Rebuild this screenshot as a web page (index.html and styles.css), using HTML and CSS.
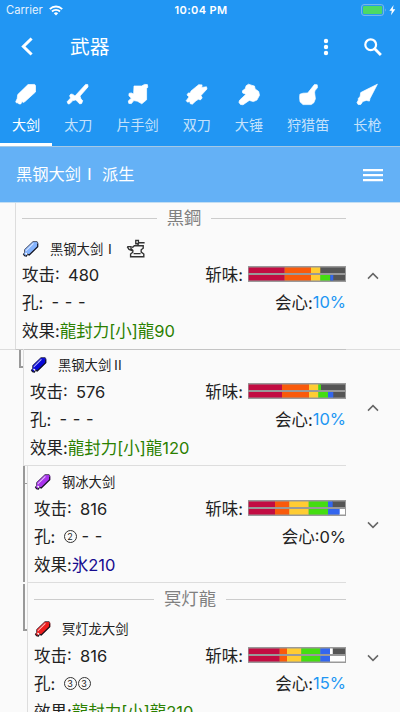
FILE: index.html
```html
<!DOCTYPE html>
<html lang="zh-CN">
<head>
<meta charset="utf-8">
<meta name="viewport" content="width=device-width">
<title>武器</title>
<link rel="stylesheet" href="styles.css">
</head>
<body>
<svg class="defs" aria-hidden="true">
  <symbol id="blade" viewBox="0 0 17 17">
    <path d="M11 1.5h4.2l1 1v4.2L7.5 15.2l-2-.7-1 1.8-1.8-.3-1.5-1.8 1.2-1.8.3-3.2z" fill="currentColor"/>
    <path d="M10.8 3.2 3.6 10.4l.2 1.2L12 3.6z" fill="#fff" opacity=".75"/>
    <path d="M15.7 3.5v3.2L7.2 15l-1.8-.8-1 1.8-1.8-.2-1.2-1.6" fill="none" stroke="#15151f" stroke-width="1.2"/>
    <path d="M1.3 14.2 2.6 12.4 2.5 9.6 11 1.6h4l.9 1.8" fill="none" stroke="#4c4c58" stroke-width=".9"/>
    <path d="m3.5 13 1.8 1.5" stroke="#fff" stroke-width="1.2"/>
  </symbol>
  <symbol id="up" viewBox="0 0 12 8"><path d="m1 6.6 5-5 5 5" fill="none" stroke="#666" stroke-width="1.5"/></symbol>
  <symbol id="down" viewBox="0 0 12 8"><path d="m1 1.4 5 5 5-5" fill="none" stroke="#666" stroke-width="1.5"/></symbol>
</svg>

<header class="top">
  <div class="status">
    <div class="carrier">Carrier
      <svg width="14" height="11" viewBox="0 0 14 11" fill="none" stroke="#fff" stroke-width="1.9"><path d="M.8 4.1a8.8 8.8 0 0 1 12.4 0M3 6.5a5.7 5.7 0 0 1 8 0"/><path d="M7 10.6 4.8 8.3a3.2 3.2 0 0 1 4.4 0z" fill="#fff" stroke="none"/></svg>
    </div>
    <div class="clock">10:04 PM</div>
    <div class="power">
      <svg width="35" height="12" viewBox="0 0 35 12"><rect x=".6" y=".6" width="22" height="10.8" rx="2.4" fill="none" stroke="#7fb9e8" stroke-width="1"/><rect x="2" y="2" width="19.2" height="8" rx="1.2" fill="#4cd964"/><path d="M24 4.2q1.6 1.8 0 3.6z" fill="#7fb9e8"/><path d="M32.6 1 28.4 6.8h2.4l-.8 4.4 4.3-6h-2.5z" fill="#fff"/></svg>
    </div>
  </div>
  <div class="toolbar">
    <svg class="back" width="12" height="19" viewBox="0 0 12 19"><path d="M10.6 1.5 2.4 9.5l8.2 8" fill="none" stroke="#fff" stroke-width="3"/></svg>
    <h1>武器</h1>
    <svg class="more" width="6" height="18" viewBox="0 0 6 18" fill="#fff"><circle cx="3" cy="3" r="2.2"/><circle cx="3" cy="9" r="2.2"/><circle cx="3" cy="15" r="2.2"/></svg>
    <svg class="search" width="18" height="18" viewBox="0 0 18 18" fill="none" stroke="#fff"><circle cx="6.7" cy="6.7" r="5.4" stroke-width="2.2"/><path d="m10.7 10.7 6.2 6.2" stroke-width="2.8"/></svg>
  </div>
  <nav class="tabs">
    <a class="tab active"><svg viewBox="0 0 24 24"><path d="M14 1.6 20.6 1.4 21.5 2.6V9L11 18.5l-1.6 1-1.4-.9-1.2 2.4-2-.1-.7-1.2-1.4.4-1-1.3 1.5-3.2.5-4z"/></svg>大剑</a>
    <a class="tab"><svg viewBox="0 0 24 24"><path d="M19.6 1.4 21.8 1.6l.2 2.3-8 9.2 1 3 1.7 1.5-1 2.8-2 .5-2.3-2.4-1.6-1.5-3 .6-2.8 3-1.8.4-1.1-2.2L4.6 15l-1-2.2L4.9 11l2 .4L9 13z"/></svg>太刀</a>
    <a class="tab"><svg viewBox="0 0 24 24"><path d="M8 3h7.6l3-1.6 2.8.2.4 2.6-1.2 1.4v11.2l-4.8 4-4.4-2.6-3.6-.6-2.4 3-2.6-.2-.5-2.5 3-2.7-2.4-2.4.1-2.4 2.2-.5 2.4 1.1z"/></svg>片手剑</a>
    <a class="tab"><svg viewBox="0 0 24 24"><path d="m6 8 7.7-6.3 3.4.2-.4 2.5 4.8-.6.5 2.2-6 6.5 1.2 2.4-1.8 2-2-.6-2.4 1.5-3.7 3.4-2.2-.6-.3-2.2-2.2.8-1.4-1.5 2.8-3.8-2-2 1.3-2 2 .2z"/></svg>双刀</a>
    <a class="tab"><svg viewBox="0 0 24 24"><path d="M5.4 7.8 8.2 5.8 9.1 2.8 11.5 1.2l3 1 3 .9.6 2.8 3.6 2.6.8 3.8-2.6 4.8-3.6 1.5-4-1.2-6.3 4.4-2.6-.4-1.5-2.2.9-2.2L9 11.2 5.7 10z"/></svg>大锤</a>
    <a class="tab"><svg viewBox="0 0 24 24"><path d="m18.4 1.6 2.8.2.3 2.8-2.6 3.2-.3 2 .8 6-1.6 4-2.6 1.8H7l-3-2.8-.4-4.2.3-3.4 3.2-1 4.6-.2z"/></svg>狩猎笛</a>
    <a class="tab"><svg viewBox="0 0 24 24"><path d="M22.4 1.2 15 15.5l-.6 2.6-3-.7-3.6 1-2 3-2.6.2-1.2-2 1.4-2.6-.2-1.6 1.9-1.8.6-4 5.4-2.8z"/></svg>长枪</a>
  </nav>
</header>

<section class="subbar">
  <h2>黑钢大剑<span class="numeral">Ⅰ</span> 派生</h2>
  <svg width="20" height="14" viewBox="0 0 20 14" fill="#fff"><path d="M0 1h20v2.3H0zM0 6h20v2.3H0zM0 11h20v2.3H0z"/></svg>
</section>

<main class="tree">
  <article class="node root">
    <div class="body">
      <div class="series"><span>黒鋼</span></div>
      <div class="name"><svg class="blade base"><use href="#blade"/></svg>黑钢大剑<span class="numeral">Ⅰ</span>
        <svg class="forge" viewBox="0 0 20 20" fill="none" stroke="#333" stroke-width="1.4"><path d="M1.2 7.6H5v2.2l1.8 1.6v1.8L4.6 15v2.8h13.2V15l-2.6-1.8v-2.4l2-1.6V6.8H8.4L6.2 8.6M1.2 7.6 3 10.4l3.8 1.4M7.6 14.6h7"/><path d="M12 6.6V4.2M12.4 3.8h6.2"/><path d="M9.8 1.4h2.6v3.4H9.8z" fill="#fafafa"/></svg></div>
      <div class="row"><span>攻击:&ensp;480</span><span class="sharp">斩味:
        <svg class="gauge" viewBox="0 0 98 16"><rect width="98" height="16" fill="#999"/><g transform="translate(0 1.5)"><path fill="#555" d="M72 0h25v5.5H72z"/><path fill="#c20c42" d="M.7 0h36v5.5H.7z"/><path fill="#f95a0b" d="M36.7 0H63v5.5H36.7z"/><path fill="#fc3" d="M63 0h9.3v5.5H63z"/></g><g transform="translate(0 9)"><path fill="#555" d="M82 0h15v5.5H82z"/><path fill="#c20c42" d="M.7 0h36v5.5H.7z"/><path fill="#f95a0b" d="M36.7 0H63v5.5H36.7z"/><path fill="#fc3" d="M63 0h9.3v5.5H63z"/><path fill="#4d1" d="M72.3 0h10v5.5h-10z"/><path fill="#36e" d="M82.3 0h3v5.5h-3z"/></g></svg></span></div>
      <div class="row"><span>孔:&ensp;<i class="slots">- - -</i></span><span>会心:<b class="plus">10%</b></span></div>
      <div class="row"><span>效果:<b class="dragon">龍封力[小]龍90</b></span></div>
    </div>
    <div class="toggle"><svg><use href="#up"/></svg></div>
  </article>

  <article class="node second">
    <div class="branch"></div>
    <div class="body">
      <div class="name"><svg class="blade navy"><use href="#blade"/></svg>黑钢大剑<span class="numeral">Ⅱ</span></div>
      <div class="row"><span>攻击:&ensp;576</span><span class="sharp">斩味:
        <svg class="gauge" viewBox="0 0 98 16"><rect width="98" height="16" fill="#999"/><g transform="translate(0 1.5)"><path fill="#555" d="M72 0h25v5.5H72z"/><path fill="#c20c42" d="M.7 0H34v5.5H.7z"/><path fill="#f95a0b" d="M34 0h27v5.5H34z"/><path fill="#fc3" d="M61 0h9.3v5.5H61z"/><path fill="#4d1" d="M70.3 0H73v5.5h-2.7z"/></g><g transform="translate(0 9)"><path fill="#555" d="M85 0h12v5.5H85z"/><path fill="#c20c42" d="M.7 0H34v5.5H.7z"/><path fill="#f95a0b" d="M34 0h27v5.5H34z"/><path fill="#fc3" d="M61 0h9.3v5.5H61z"/><path fill="#4d1" d="M70.3 0H80v5.5h-9.7z"/><path fill="#36e" d="M80 0h5.3v5.5H80z"/></g></svg></span></div>
      <div class="row"><span>孔:&ensp;<i class="slots">- - -</i></span><span>会心:<b class="plus">10%</b></span></div>
      <div class="row"><span>效果:<b class="dragon">龍封力[小]龍120</b></span></div>
    </div>
    <div class="toggle"><svg><use href="#up"/></svg></div>
  </article>

  <article class="node third">
    <div class="branch"></div>
    <div class="body">
      <div class="name"><svg class="blade violet"><use href="#blade"/></svg>钢冰大剑</div>
      <div class="row"><span>攻击:&ensp;816</span><span class="sharp">斩味:
        <svg class="gauge" viewBox="0 0 98 16"><rect width="98" height="16" fill="#999"/><g transform="translate(0 1.5)"><path fill="#555" d="M84 0h13v5.5H84z"/><path fill="#c20c42" d="M.7 0H27v5.5H.7z"/><path fill="#f95a0b" d="M27 0h14.3v5.5H27z"/><path fill="#fc3" d="M41.3 0h19.4v5.5H41.3z"/><path fill="#4d1" d="M60.7 0H80v5.5H60.7z"/><path fill="#36e" d="M80 0h4.7v5.5H80z"/></g><g transform="translate(0 9)"><path fill="#fff" d="M91 0h6v5.5h-6z"/><path fill="#c20c42" d="M.7 0H27v5.5H.7z"/><path fill="#f95a0b" d="M27 0h14.3v5.5H27z"/><path fill="#fc3" d="M41.3 0h19.4v5.5H41.3z"/><path fill="#4d1" d="M60.7 0H80v5.5H60.7z"/><path fill="#36e" d="M80 0h11.7v5.5H80z"/></g></svg></span></div>
      <div class="row"><span>孔:&ensp;<i class="gem">2</i><i class="slots after">- -</i></span><span>会心:0%</span></div>
      <div class="row"><span>效果:<b class="ice">氷210</b></span></div>
    </div>
    <div class="toggle"><svg><use href="#down"/></svg></div>
  </article>

  <article class="node fourth">
    <div class="branch"></div>
    <div class="body">
      <div class="series"><span>冥灯龍</span></div>
      <div class="name"><svg class="blade red"><use href="#blade"/></svg>冥灯龙大剑</div>
      <div class="row"><span>攻击:&ensp;816</span><span class="sharp">斩味:
        <svg class="gauge" viewBox="0 0 98 16"><rect width="98" height="16" fill="#999"/><g transform="translate(0 1.5)"><path fill="#555" d="M84.7 0H97v5.5H84.7z"/><path fill="#c20c42" d="M.7 0h31v5.5H.7z"/><path fill="#f95a0b" d="M31.7 0H39v5.5h-7.3z"/><path fill="#fc3" d="M39 0h14.3v5.5H39z"/><path fill="#4d1" d="M53.3 0h19v5.5h-19z"/><path fill="#36e" d="M72.3 0H82v5.5h-9.7z"/><path fill="#fff" d="M82 0h2.7v5.5H82z"/></g><g transform="translate(0 9)"><path fill="#fff" d="M82 0h15v5.5H82z"/><path fill="#c20c42" d="M.7 0h31v5.5H.7z"/><path fill="#f95a0b" d="M31.7 0H39v5.5h-7.3z"/><path fill="#fc3" d="M39 0h14.3v5.5H39z"/><path fill="#4d1" d="M53.3 0h19v5.5h-19z"/><path fill="#36e" d="M72.3 0H82v5.5h-9.7z"/></g></svg></span></div>
      <div class="row"><span>孔:&ensp;<i class="gem">3</i><i class="gem">3</i></span><span>会心:<b class="plus">15%</b></span></div>
      <div class="row"><span>效果:<b class="dragon">龍封力[小]龍210</b></span></div>
    </div>
    <div class="toggle"><svg><use href="#down"/></svg></div>
  </article>
</main>
</body>
</html>
```
FILE: styles.css
```css
* { box-sizing: border-box; }

body {
  margin: 0;
  height: 712px;
  overflow: hidden;
  display: flex;
  flex-direction: column;
  background: #fafafa;
  color: #222;
  font-family: Inter, "Noto Sans CJK SC", sans-serif;
  font-size: 16.5px;
}

svg { display: block; flex: none; }
.defs { display: none; }
h1, h2 { margin: 0; font-weight: 400; white-space: pre; }
i, b { font-style: normal; font-weight: 400; }
.numeral { font-family: "Noto Sans CJK SC", sans-serif; line-height: 1; }

.top {
  flex: none;
  height: 146px;
  background: #2196f3;
  color: #fff;
}

.status {
  display: grid;
  grid-template-columns: 1fr auto 1fr;
  align-items: center;
  height: 20px;
  padding: 0 4px 0 6px;
  font-size: 11.2px;
}
.carrier { display: flex; align-items: center; gap: 6px; color: #e4f2fd; }
.clock { font-weight: 600; font-size: 11px; letter-spacing: .35px; }
.power { display: flex; justify-content: flex-end; }

.toolbar {
  display: flex;
  align-items: center;
  height: 53px;
  padding: 0 18px 0 21px;
}
.toolbar h1 {
  margin-left: 37px;
  font-size: 19.7px;
  line-height: 24px;
}
.more { margin-left: auto; }
.search { margin-left: 35px; }

.tabs {
  display: flex;
  height: 73px;
}
.tab {
  display: flex;
  flex: none;
  flex-direction: column;
  align-items: center;
  gap: 8px;
  padding: 10px 12px 0;
  border-bottom: 3px solid transparent;
  color: #c5e2fb;
  font-size: 14.1px;
  line-height: 20px;
}
.tab svg { width: 24px; height: 24px; fill: #fff; stroke: #fff; stroke-width: .7; stroke-linejoin: round; }
.tab.active { color: #fff; border-color: #fff; }

.subbar {
  display: flex;
  flex: none;
  align-items: center;
  justify-content: space-between;
  height: 57px;
  padding: 0 17px 0 16px;
  border-top: 1px solid #a5c9e6;
  border-bottom: 1px solid #c3def3;
  background: #64b1f6;
  color: #fff;
}
.subbar h2 { font-size: 16.3px; line-height: 20px; padding-bottom: 2px; }

.tree { display: flex; flex: none; flex-direction: column; }

.node { display: flex; height: 117px; }
.body {
  flex: 1;
  padding-left: 6px;
  border-left: 1px solid #ddd;
  border-bottom: 1px solid #ddd;
}
.root { height: 147px; border-bottom: 1px solid #ddd; padding-left: 15px; }
.root .body { margin-bottom: -1px; border-bottom-color: #c4c4c4; }
.second, .third, .fourth { padding-left: 19px; }
.second { margin-top: -1px; }
.second .branch { margin-top: 1px; }
.third, .fourth { padding-left: 23px; }
.fourth { height: 150px; }

.branch {
  flex: none;
  width: 4px;
  height: 18px;
  border-left: 2px solid #999;
  border-bottom: 2px solid #999;
}
.third .branch {
  height: 116px;
  border-bottom: 0;
  background: linear-gradient(#999, #999) 0 17px / 4px 1px no-repeat;
}
.fourth .branch { height: 47px; margin-top: 1px; }

.series {
  display: flex;
  align-items: center;
  gap: 10px;
  height: 30px;
  color: #808080;
  font-size: 17.3px;
  line-height: 24px;
}
.series::before, .series::after {
  content: "";
  flex: 1;
  height: 1px;
  background: #ccc;
}
.series span { padding-bottom: 1px; }
.fourth .series { padding-top: 3px; }

.name {
  display: flex;
  align-items: center;
  height: 28px;
  padding-top: 3px;
  font-size: 13.3px;
}
.root .name { height: 28px; }
.root .name + .row { margin-top: -1px; }
.blade { width: 17px; height: 17px; margin-right: 11px; }
.base { color: #85b4ff; }
.navy { color: #0808d8; }
.violet { color: #a933ed; }
.red { color: #ee1c1c; }
.forge { width: 20px; height: 20px; margin-left: 10px; }

.row {
  display: flex;
  align-items: center;
  justify-content: space-between;
  height: 28px;
  white-space: nowrap;
}
.row > span { display: flex; align-items: center; white-space: pre; }
.row > .sharp { white-space: normal; gap: 5px; }
.gauge { width: 98px; height: 16px; }
.slots { letter-spacing: .5px; }
.after { margin-left: 4px; }
.gem {
  display: grid;
  place-items: center;
  width: 13px;
  height: 13px;
  margin-right: 1px;
  border: 1px solid #333;
  border-radius: 50%;
  font-size: 9px;
  line-height: 1;
}
.plus { color: #2196f3; }
.dragon { color: #2b8000; }
.ice { color: #160b8f; }

.toggle {
  display: flex;
  flex: none;
  width: 54px;
  align-items: center;
  justify-content: center;
}
.toggle svg { width: 12px; height: 8px; }
```
